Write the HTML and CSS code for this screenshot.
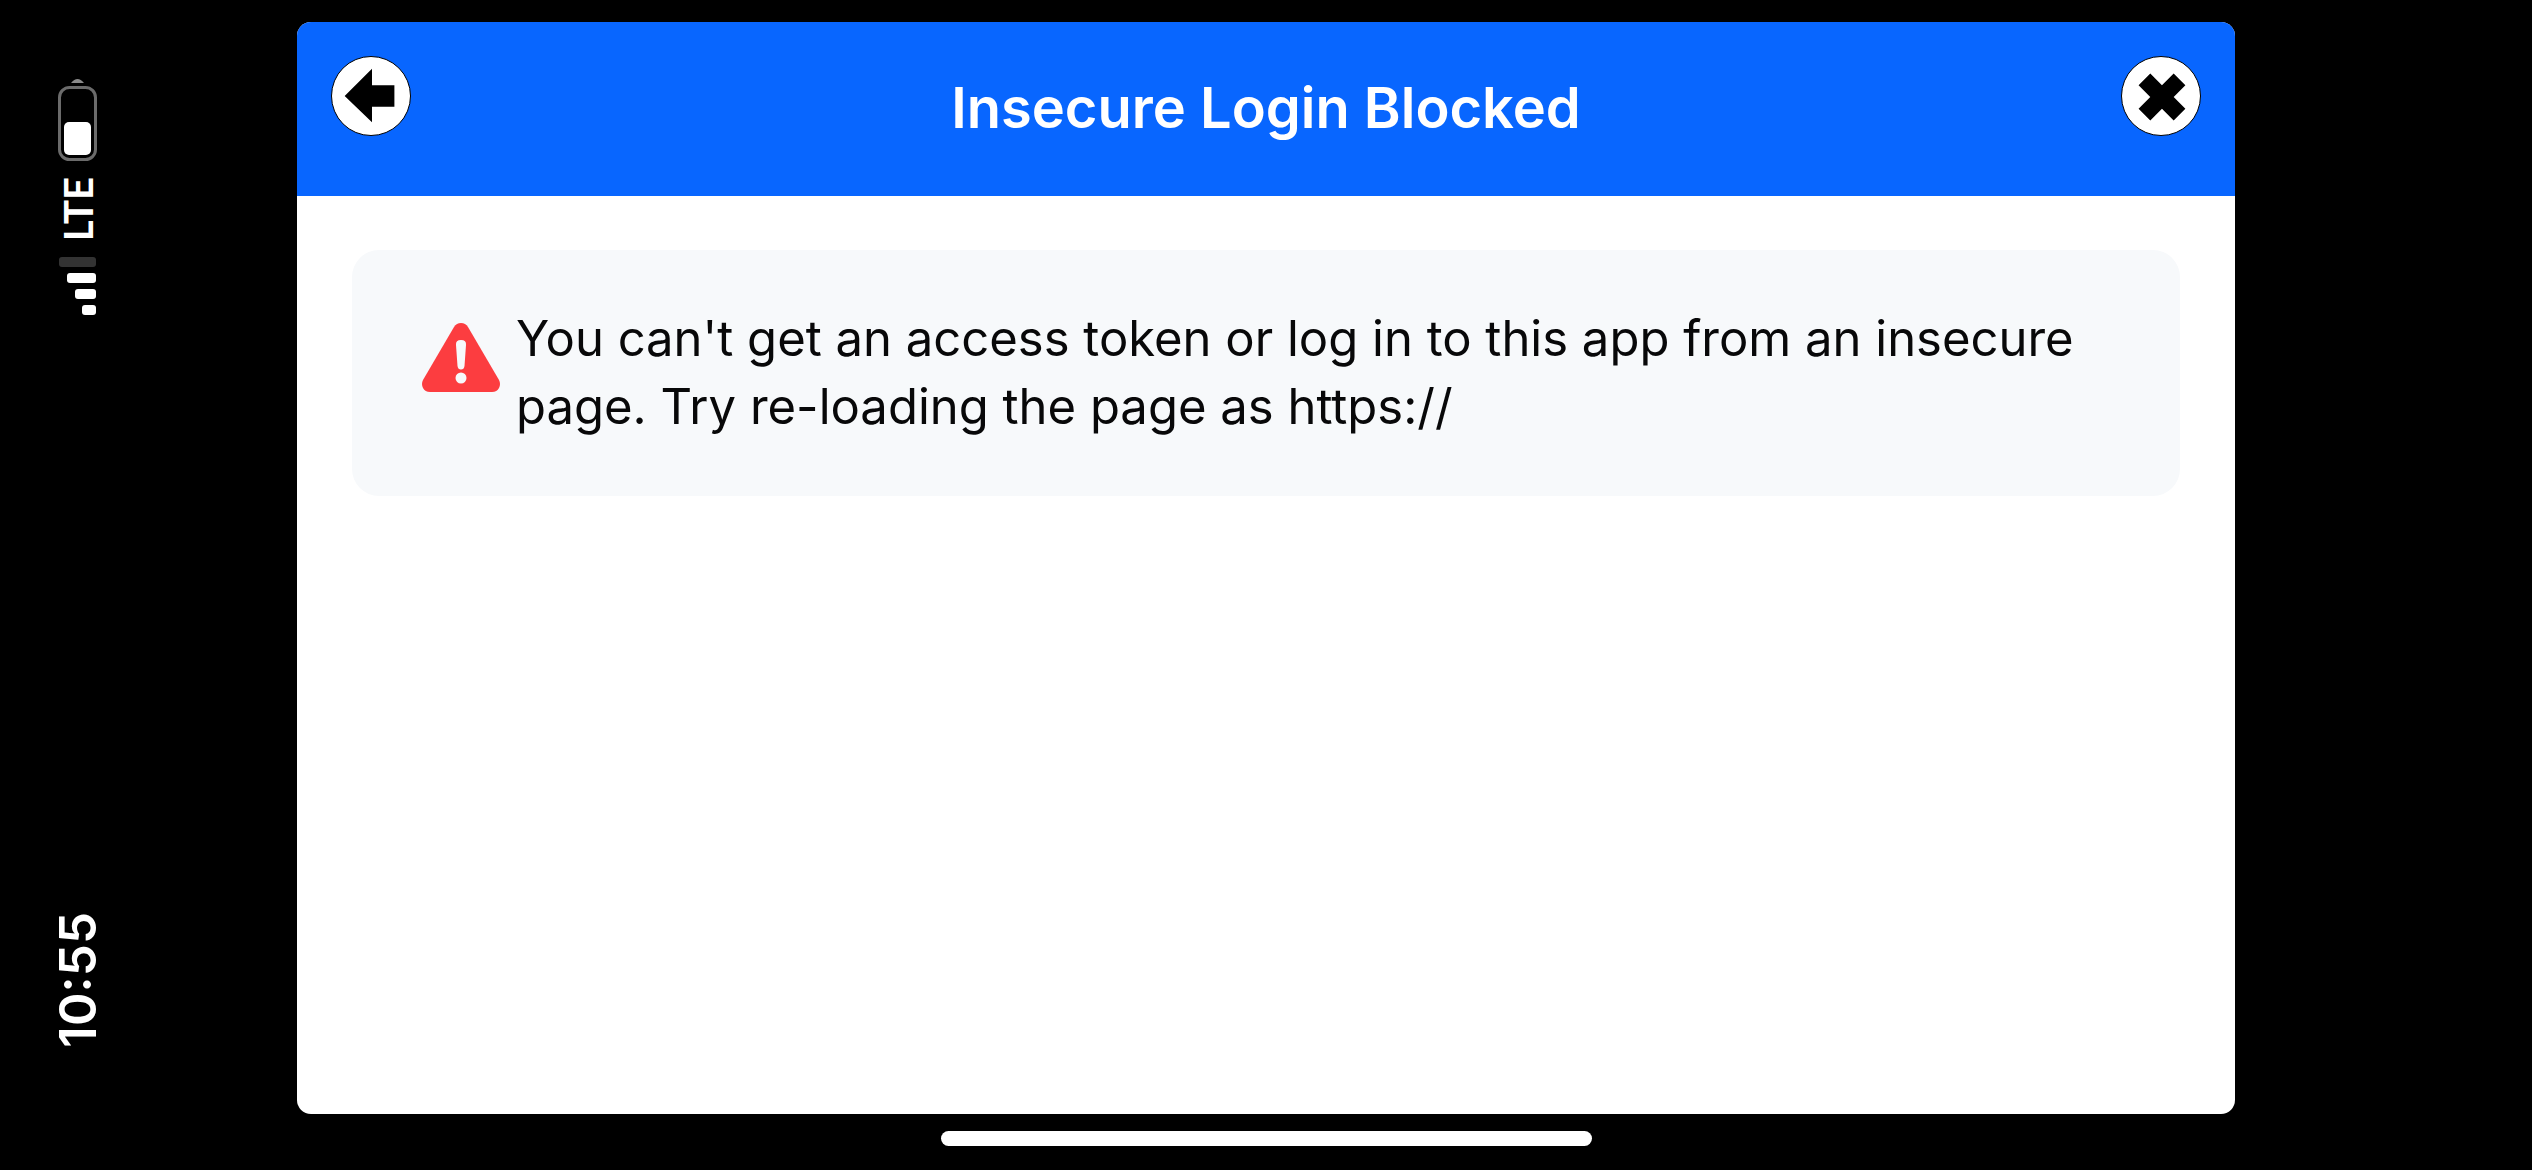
FILE: index.html
```html
<!DOCTYPE html>
<html lang="en">
<head>
  <meta charset="UTF-8" />
  <meta name="viewport" content="width=device-width, initial-scale=1" />
  <title>Insecure Login Blocked</title>
  <link rel="stylesheet" href="styles.css">
</head>
<body>
  <div class="screen">
    <!-- Status bar, turned on its side -->
    <aside class="status-bar">
      <div class="status-group">
        <svg class="battery" viewBox="0 0 40 82" role="img" aria-label="Battery">
          <path d="M13 4Q19.500-4 26 4Z" fill="#8a8a8a" />
          <rect x="1.500" y="8.500" width="36" height="72" rx="10" fill="none" stroke="#6b6b6b" stroke-width="3" />
          <rect x="6" y="43" width="27" height="33" rx="5" fill="#fff" />
        </svg>
        <span class="network">LTE</span>
        <svg class="signal" viewBox="0 0 40 58" role="img" aria-label="Signal">
          <rect x="1" y="0" width="37" height="10" rx="3" fill="#333" />
          <rect x="9" y="16" width="29" height="10" rx="3" fill="#fff" />
          <rect x="17" y="32" width="21" height="10" rx="3" fill="#fff" />
          <rect x="24" y="48" width="14" height="10" rx="3" fill="#fff" />
        </svg>
      </div>
      <time class="clock">10:55</time>
    </aside>

    <main class="dialog">
      <header class="dialog-header">
        <button class="round-btn" type="button" aria-label="Back">
          <svg viewBox="0 0 80 80"><path d="M13 40 41 12V29H64V51H41V67Z" /></svg>
        </button>
        <h1 class="dialog-title">Insecure Login Blocked</h1>
        <button class="round-btn" type="button" aria-label="Close">
          <svg viewBox="0 0 80 80"><path d="M17 29 29 17 41 29 53 17 65 29 53 41 65 53 53 65 41 53 29 65 17 53 29 41Z" /></svg>
        </button>
      </header>
      <section class="dialog-body">
        <div class="notice" role="alert">
          <svg class="warning-icon" viewBox="0 0 78 69" aria-hidden="true">
            <path d="M32 4Q34.500 0 39 0T46 4L77 57Q79 61 77 65T70 69H8Q3 69 1 65T1 57Z" fill="#fc3d40" />
            <path d="M34 22Q33.500 17 39 17T44 22L42.500 43Q42 46.500 39 46.500T35.500 43Z" fill="#f7f9fb" />
            <circle cx="39" cy="55" r="5.500" fill="#f7f9fb" />
          </svg>
          <p class="notice-text">You can't get an access token or log in to this app from an insecure page. Try re-loading the page as https://</p>
        </div>
      </section>
    </main>

    <div class="home-indicator"></div>
  </div>
</body>
</html>
```

FILE: styles.css
```css
* {
  box-sizing: border-box;
}
body {
  margin: 0;
  background-color: #000;
  font-family: Inter, "Liberation Sans", sans-serif;
}
.screen {
  display: grid;
  grid-template-columns: 297px 1fr 297px;
  grid-template-rows: 1fr 15px;
  row-gap: 17px;
  min-height: 100vh;
  padding: 22px 0 24px;
}

/* Status bar */
.status-bar {
  display: flex;
  flex-direction: column;
  justify-content: space-between;
  align-items: flex-start;
  padding: 57px 0 66px 58px;
  color: #fff;
}
.status-group {
  display: flex;
  flex-direction: column;
  align-items: center;
  gap: 16px;
}
.battery {
  width: 40px;
  height: 82px;
}
.signal {
  width: 40px;
  height: 58px;
}
.network,
.clock {
  writing-mode: vertical-rl;
  transform: rotate(180deg);
  line-height: 40px;
}
.network {
  font-family: Lato, sans-serif;
  font-size: 40px;
  font-weight: 700;
}
.clock {
  font-size: 51px;
  font-weight: 600;
}

/* Dialog */
.dialog {
  display: flex;
  flex-direction: column;
  overflow: hidden;
  border-radius: 14px;
  background-color: #fff;
}
.dialog-header {
  display: flex;
  justify-content: space-between;
  align-items: flex-start;
  height: 174px;
  padding: 34px;
  background-color: #0866ff;
}
.dialog-title {
  margin: 16px 0 0;
  color: #fff;
  font-size: 56px;
  font-weight: 600;
  line-height: 72px;
}
.round-btn {
  width: 80px;
  height: 80px;
  padding: 0;
  border: 1px solid #000;
  border-radius: 50%;
  background-color: #fff;
  cursor: pointer;
}
.round-btn svg {
  display: block;
  width: 100%;
  height: 100%;
}
.dialog-body {
  padding: 54px 55px;
}
.notice {
  display: flex;
  align-items: flex-start;
  gap: 16px;
  padding: 55px 70px;
  border-radius: 27px;
  background-color: #f7f9fb;
}
.warning-icon {
  flex: none;
  width: 78px;
  height: 69px;
  margin-top: 18px;
}
.notice-text {
  margin: 0;
  color: #080809;
  font-size: 49px;
  line-height: 68px;
}

.home-indicator {
  grid-column: 2;
  justify-self: center;
  width: 651px;
  border-radius: 8px;
  background-color: #fff;
}
```
